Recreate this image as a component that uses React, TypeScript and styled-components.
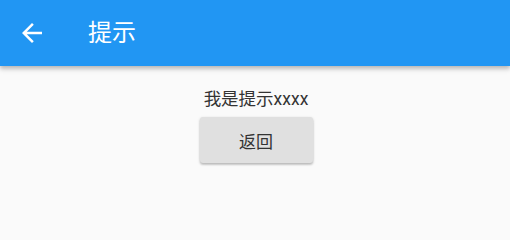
import * as React from "react"
import styled, { createGlobalStyle } from "styled-components"

const GlobalStyle = createGlobalStyle`
html, body {
  margin: 0;
  padding: 0;
  background: #fafafa;
}
body {
  font-family: Roboto, "Noto Sans CJK SC", sans-serif;
}
`

const Page = styled.div`
width: 510px;
height: 232px;
display: flex;
flex-direction: column;
background: #fafafa;
overflow: hidden;
`

const AppBar = styled.header`
height: 66px;
flex-shrink: 0;
display: flex;
align-items: center;
background-color: #2196f3;
color: #fff;
box-shadow: 0 2px 4px rgba(0, 0, 0, 0.2), 0 4px 5px rgba(0, 0, 0, 0.1);
position: relative;
z-index: 2;
`

const BackButton = styled.button`
width: 30px;
height: 30px;
margin-left: 17px;
padding: 0;
border: none;
background: transparent;
color: #fff;
display: flex;
align-items: center;
justify-content: center;
`

const Title = styled.h1`
margin: 0 0 0 41px;
font-size: 24px;
font-weight: 400;
line-height: 1;
`

const Body = styled.main`
flex: 1;
display: flex;
flex-direction: column;
align-items: center;
padding-top: 21px;
padding-left: 2px;
`

const Message = styled.p`
margin: 0;
font-size: 17.5px;
line-height: 24px;
color: #333;
`

const RaisedButton = styled.button`
margin-top: 6px;
width: 113px;
height: 46px;
border: none;
border-radius: 3px;
background: #e0e0e0;
color: #333;
font-family: inherit;
font-size: 17px;
box-shadow: 0 1px 3px rgba(0, 0, 0, 0.2), 0 2px 2px rgba(0, 0, 0, 0.12);
`

const ArrowBack: React.FC<{ size?: number }> = ({ size = 30 }) => (
    <svg width={size} height={size} viewBox="0 0 24 24" fill="currentColor">
        <path d="M20 11H7.83l5.59-5.59L12 4l-8 8 8 8 1.41-1.41L7.83 13H20v-2z" />
    </svg>
)

const App: React.FC<{}> = () => {
    return (
        <Page>
            <GlobalStyle />
            <AppBar>
                <BackButton aria-label="返回">
                    <ArrowBack />
                </BackButton>
                <Title>提示</Title>
            </AppBar>
            <Body>
                <Message>我是提示xxxx</Message>
                <RaisedButton>返回</RaisedButton>
            </Body>
        </Page>
    )
}

export default App
